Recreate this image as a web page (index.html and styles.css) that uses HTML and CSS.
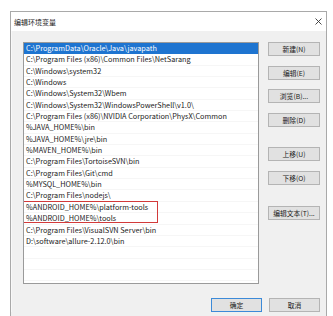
FILE: index.html
```html
<!DOCTYPE html>
<html lang="zh-CN">
<head>
<meta charset="utf-8">
<title>编辑环境变量</title>
<link rel="stylesheet" href="styles.css">
</head>
<body>
<div class="window">
  <div class="titlebar">
    <span class="title">编辑环境变量</span>
    <svg class="close" width="7" height="7" viewBox="0 0 7 7"><path d="M0.5 0.5 L6.5 6.5 M6.5 0.5 L0.5 6.5" stroke="#333" stroke-width="0.9" fill="none"/></svg>
  </div>
  <div class="client">
    <div class="main">
      <div class="listbox">
        <div class="row selected">C:\ProgramData\Oracle\Java\javapath</div>
        <div class="row">C:\Program Files (x86)\Common Files\NetSarang</div>
        <div class="row">C:\Windows\system32</div>
        <div class="row">C:\Windows</div>
        <div class="row">C:\Windows\System32\Wbem</div>
        <div class="row">C:\Windows\System32\WindowsPowerShell\v1.0\</div>
        <div class="row">C:\Program Files (x86)\NVIDIA Corporation\PhysX\Common</div>
        <div class="row">%JAVA_HOME%\bin</div>
        <div class="row">%JAVA_HOME%\jre\bin</div>
        <div class="row">%MAVEN_HOME%\bin</div>
        <div class="row">C:\Program Files\TortoiseSVN\bin</div>
        <div class="row">C:\Program Files\Git\cmd</div>
        <div class="row">%MYSQL_HOME%\bin</div>
        <div class="row">C:\Program Files\nodejs\</div>
        <div class="row">%ANDROID_HOME%\platform-tools</div>
        <div class="row">%ANDROID_HOME%\tools</div>
        <div class="row">C:\Program Files\VisualSVN Server\bin</div>
        <div class="row">D:\software\allure-2.12.0\bin</div>
        <div class="row"></div>
        <div class="row"></div>
        <div class="row"></div>
        <div class="highlight-box"></div>
      </div>
      <div class="buttons">
        <div class="btn">新建(N)</div>
        <div class="btn">编辑(E)</div>
        <div class="btn">浏览(B)...</div>
        <div class="btn">删除(D)</div>
        <div class="btn sep1">上移(U)</div>
        <div class="btn">下移(O)</div>
        <div class="btn sep2">编辑文本(T)...</div>
      </div>
    </div>
    <div class="footer">
      <div class="btn default">确定</div>
      <div class="btn">取消</div>
    </div>
  </div>
</div>
</body>
</html>
```
FILE: styles.css
```css
html, body {
  margin: 0;
  padding: 0;
  background: #ffffff;
  overflow: hidden;
}
body {
  width: 333px;
  height: 316px;
  font-family: "Noto Sans CJK SC", "Noto Sans", sans-serif;
  color: #1e1e1e;
}
.window {
  margin: 11px 6px 0 10px;
  border: 1px solid #a9a9a9;
  border-bottom: none;
  height: 320px;
  background: #f0f0f0;
  box-sizing: border-box;
}
.titlebar {
  height: 19px;
  background: #ffffff;
  display: flex;
  align-items: center;
  justify-content: space-between;
  padding: 0 4px 0 3px;
}
.title {
  font-size: 7px;
  color: #1a1a1a;
}
.close {
  display: block;
}
.client {
  padding: 11px 6px 0 11px;
  border-left: 1px solid #f8f8f8;
}
.main {
  display: flex;
  gap: 9px;
}
.listbox {
  position: relative;
  width: 236px;
  height: 242px;
  box-sizing: border-box;
  border: 1px solid #9a9a9a;
  background: #ffffff;
  overflow: hidden;
}
.row {
  height: 11.35px;
  box-sizing: border-box;
  border-bottom: 1px solid #f6f6f6;
  font-size: 7.3px;
  line-height: 10.35px;
  padding-left: 2px;
  white-space: nowrap;
  color: #1a1a1a;
}
.row.selected {
  background: #1e74d0;
  color: #ffffff;
  border-bottom-color: #1e74d0;
}
.highlight-box {
  position: absolute;
  left: -1px;
  top: 158px;
  width: 135px;
  height: 22px;
  border: 1px solid #d23a3a;
  box-sizing: border-box;
}
.buttons {
  display: flex;
  flex-direction: column;
  gap: 9.5px;
  width: 52px;
}
.btn {
  height: 14px;
  box-sizing: border-box;
  border: 1px solid #b4b4b4;
  background: #e1e1e1;
  font-size: 6.8px;
  line-height: 12px;
  text-align: center;
  color: #1a1a1a;
  white-space: nowrap;
}
.btn.sep1 {
  margin-top: 11px;
}
.btn.sep2 {
  margin-top: 12px;
}
.footer {
  display: flex;
  justify-content: flex-end;
  gap: 7px;
  margin-top: 14px;
}
.footer .btn {
  width: 51px;
}
.btn.default {
  border-color: #3c8ad8;
}
```
